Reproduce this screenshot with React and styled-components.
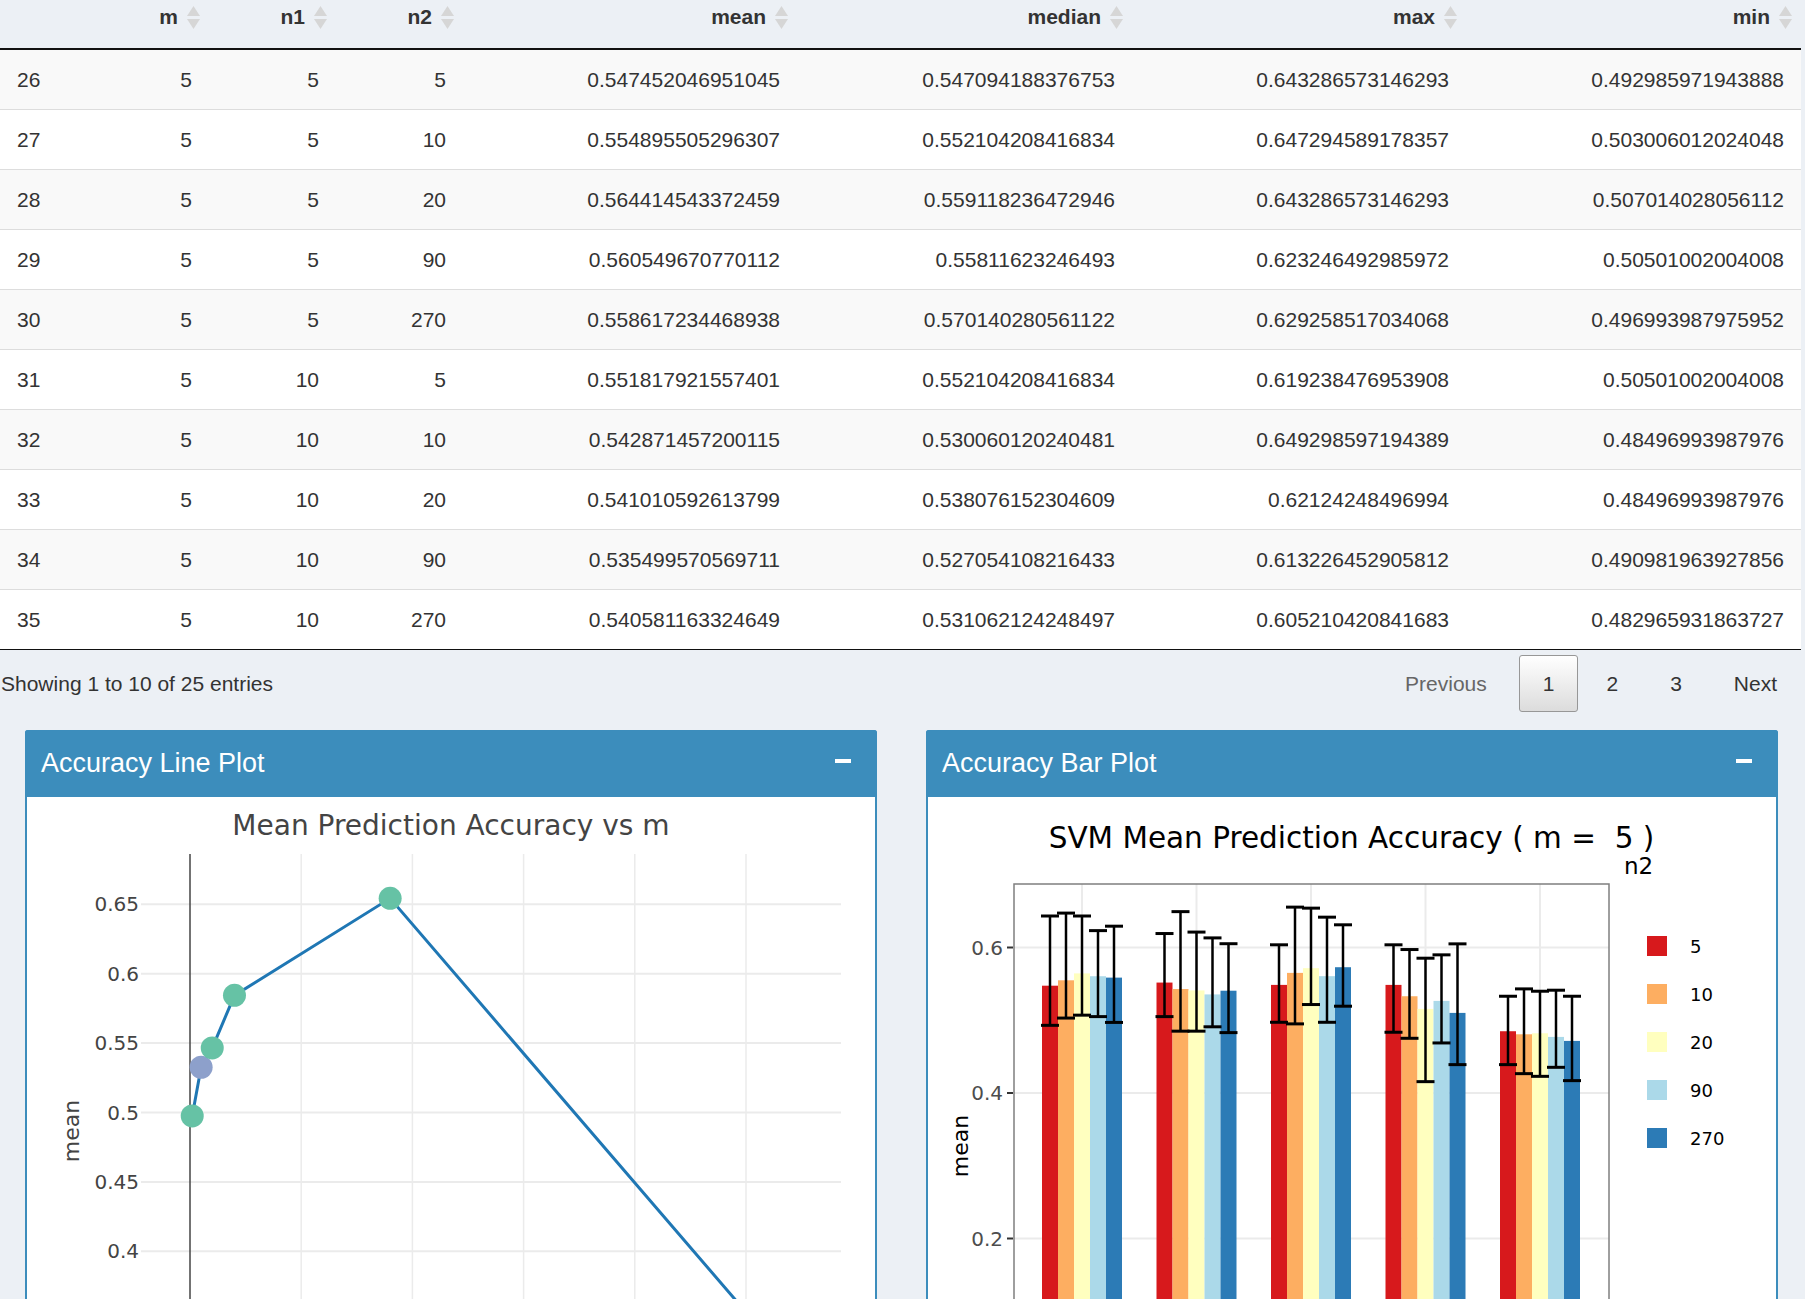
import React from 'react';
import styled, { createGlobalStyle } from 'styled-components';

const UI_FONT = '"Liberation Sans", Arial, sans-serif';
const PLOT_FONT = '"DejaVu Sans", Verdana, sans-serif';
const COLS = '75px 127px 127px 127px 334px 335px 334px 342px';

const GlobalStyle = createGlobalStyle`
  html, body {
    margin: 0;
    padding: 0;
    background: #ecf0f5;
    overflow: hidden;
  }
`;

const Page = styled.div`
  height: 1299px;
  overflow: hidden;
  font-family: ${UI_FONT};
  font-size: 21px;
  color: #333;
`;

const Table = styled.div`
  width: 1801px;
`;

const HeaderRow = styled.div`
  display: grid;
  grid-template-columns: ${COLS};
  height: 50px;
  box-sizing: border-box;
  border-bottom: 2px solid #111;
`;

const HeadCell = styled.div`
  display: flex;
  align-items: center;
  justify-content: flex-end;
  gap: 9px;
  padding: 0 ${({ $last }) => ($last ? 9 : 2)}px 14px 0;
  font-weight: 700;
`;

const Row = styled.div`
  display: grid;
  grid-template-columns: ${COLS};
  align-items: center;
  height: 60px;
  box-sizing: border-box;
  background: ${({ $odd }) => ($odd ? '#f9f9f9' : '#fff')};
  border-bottom: 1px solid ${({ $end }) => ($end ? '#111' : '#ddd')};
`;

const Cell = styled.div`
  text-align: ${({ $left }) => ($left ? 'left' : 'right')};
  padding: 0 ${({ $last }) => ($last ? 17 : 10)}px 0 ${({ $left }) => ($left ? 17 : 10)}px;
  white-space: nowrap;
`;

const Footer = styled.div`
  display: flex;
  justify-content: space-between;
  align-items: center;
  height: 80px;
  box-sizing: border-box;
  padding: 5px 4px 18px 1px;
`;

const Info = styled.div`
  color: #333;
`;

const Pager = styled.div`
  display: flex;
  align-items: center;
`;

const PageButton = styled.span`
  display: flex;
  align-items: center;
  height: 57px;
  box-sizing: border-box;
  padding: 0 ${({ $muted }) => ($muted ? 27 : 23)}px 0 23px;
  margin-left: 4px;
  border: 1px solid ${({ $current }) => ($current ? '#979797' : 'transparent')};
  border-radius: 3px;
  color: ${({ $muted }) => ($muted ? '#666' : '#333')};
  background: ${({ $current }) =>
    $current ? 'linear-gradient(to bottom, #fff 0%, #dcdcdc 100%)' : 'transparent'};
`;

const BoxRow = styled.div`
  display: grid;
  grid-template-columns: 1fr 1fr;
  gap: 49px;
  padding: 0 27px 0 25px;
`;

const Box = styled.div`
  background: #fff;
  border: 2px solid #3c8dbc;
  border-radius: 3px;
`;

const BoxHeader = styled.div`
  display: flex;
  justify-content: space-between;
  align-items: center;
  height: 67px;
  padding: 0 24px 0 16px;
  margin: -2px -2px 0;
  border-radius: 3px 3px 0 0;
  background: #3c8dbc;
  color: #fff;
`;

const BoxTitle = styled.h3`
  margin: 0;
  font-family: ${UI_FONT};
  font-size: 27px;
  font-weight: 400;
`;

const Minus = styled.span`
  width: 16px;
  height: 4px;
  margin-top: -5px;
  margin-right: 2px;
  background: #fff;
`;

const BoxBody = styled.div`
  height: 560px;
  overflow: hidden;
`;

const Chart = styled.svg`
  display: block;
  font-family: ${PLOT_FONT};
`;

const PreText = styled.text`
  white-space: pre;
`;

const rows = [
  ['26', '5', '5', '5', '0.547452046951045', '0.547094188376753', '0.643286573146293', '0.492985971943888'],
  ['27', '5', '5', '10', '0.554895505296307', '0.552104208416834', '0.647294589178357', '0.503006012024048'],
  ['28', '5', '5', '20', '0.564414543372459', '0.559118236472946', '0.643286573146293', '0.507014028056112'],
  ['29', '5', '5', '90', '0.560549670770112', '0.55811623246493', '0.623246492985972', '0.50501002004008'],
  ['30', '5', '5', '270', '0.558617234468938', '0.570140280561122', '0.629258517034068', '0.496993987975952'],
  ['31', '5', '10', '5', '0.551817921557401', '0.552104208416834', '0.619238476953908', '0.50501002004008'],
  ['32', '5', '10', '10', '0.542871457200115', '0.530060120240481', '0.649298597194389', '0.48496993987976'],
  ['33', '5', '10', '20', '0.541010592613799', '0.538076152304609', '0.62124248496994', '0.48496993987976'],
  ['34', '5', '10', '90', '0.535499570569711', '0.527054108216433', '0.613226452905812', '0.490981963927856'],
  ['35', '5', '10', '270', '0.540581163324649', '0.531062124248497', '0.605210420841683', '0.482965931863727'],
];

const headers = ['', 'm', 'n1', 'n2', 'mean', 'median', 'max', 'min'];

const SortIcon = () => (
  <svg width="13" height="23" viewBox="0 0 13 23">
    <path d="M6.5 0 L13 10 L0 10 Z" fill="#d6d6d6" />
    <path d="M0 13 L13 13 L6.5 23 Z" fill="#d6d6d6" />
  </svg>
);

// line plot: mean vs m
const linePoints = [
  { m: 1, v: 0.4975, c: '#66c2a5' },
  { m: 5, v: 0.5326, c: '#8da0cb' },
  { m: 10, v: 0.5465, c: '#66c2a5' },
  { m: 20, v: 0.5844, c: '#66c2a5' },
  { m: 90, v: 0.6543, c: '#66c2a5' },
  { m: 270, v: 0.3189, c: '#66c2a5' },
];
const lx = (m) => 163 + m * 2.224;
const ly = (v) => 107.3 + (0.65 - v) * 1388;

const LinePlot = () => (
  <Chart width="848" height="560">
    <text x="424" y="28" fontSize="28" fill="#444" textAnchor="middle" dominantBaseline="central">
      Mean Prediction Accuracy vs m
    </text>
    {[1, 2, 3, 4, 5].map((k) => (
      <line key={k} x1={163 + 111.2 * k} x2={163 + 111.2 * k} y1="57" y2="560" stroke="#ebebeb" strokeWidth="1.5" />
    ))}
    {[0.65, 0.6, 0.55, 0.5, 0.45, 0.4, 0.35].map((v) => (
      <line key={v} x1="114" x2="814" y1={ly(v)} y2={ly(v)} stroke="#ebebeb" strokeWidth="2" />
    ))}
    {['0.65', '0.6', '0.55', '0.5', '0.45', '0.4'].map((t) => (
      <text key={t} x="112" y={ly(Number(t))} fontSize="20" fill="#444" textAnchor="end" dominantBaseline="central">
        {t}
      </text>
    ))}
    <line x1="163" x2="163" y1="57" y2="560" stroke="#444" strokeWidth="1.5" />
    <text
      x="44.5"
      y="334"
      fontSize="22"
      fill="#444"
      textAnchor="middle"
      dominantBaseline="central"
      transform="rotate(-90 44.5 334)"
    >
      mean
    </text>
    <polyline
      points={linePoints.map((p) => `${lx(p.m)},${ly(p.v)}`).join(' ')}
      fill="none"
      stroke="#1f77b4"
      strokeWidth="3"
    />
    {linePoints.slice(0, 5).map((p) => (
      <circle key={p.m} cx={lx(p.m)} cy={ly(p.v)} r="11.5" fill={p.c} />
    ))}
  </Chart>
);

// bar plot: mean with min/max error bars, grouped by n1, filled by n2
const fills = ['#d7191c', '#fdae61', '#ffffbf', '#abd9e9', '#2c7bb6'];
const legend = ['5', '10', '20', '90', '270'];
const groups = [
  { mean: [0.5475, 0.5549, 0.5644, 0.5605, 0.5586], max: [0.6433, 0.6473, 0.6433, 0.6232, 0.6293], min: [0.493, 0.503, 0.507, 0.505, 0.497] },
  { mean: [0.5518, 0.5429, 0.541, 0.5355, 0.5406], max: [0.6192, 0.6493, 0.6212, 0.6132, 0.6052], min: [0.505, 0.485, 0.485, 0.491, 0.483] },
  { mean: [0.5486, 0.5651, 0.5716, 0.5606, 0.5729], max: [0.6037, 0.6555, 0.6541, 0.6417, 0.6312], min: [0.4972, 0.495, 0.5216, 0.4972, 0.5193] },
  { mean: [0.5486, 0.533, 0.5156, 0.5266, 0.5101], max: [0.6037, 0.5972, 0.5853, 0.5899, 0.605], min: [0.4835, 0.4752, 0.4156, 0.4688, 0.439] },
  { mean: [0.4849, 0.4807, 0.4821, 0.4771, 0.4716], max: [0.533, 0.5431, 0.5399, 0.5413, 0.533], min: [0.439, 0.4266, 0.4229, 0.4353, 0.417] },
];
const by = (v) => 587 - v * 727.5;
const gx = (i) => 154 + 114.5 * i;

const BarPlot = () => (
  <Chart width="848" height="560">
    <PreText x="423.5" y="41" fontSize="29.5" fill="#000" textAnchor="middle" dominantBaseline="central">
      {'SVM Mean Prediction Accuracy ( m =  5 )'}
    </PreText>
    <text x="696" y="69" fontSize="23" fill="#000" dominantBaseline="central">
      n2
    </text>
    {[0.2, 0.4, 0.6].map((v) => (
      <line key={v} x1="86" x2="681" y1={by(v)} y2={by(v)} stroke="#ebebeb" strokeWidth="2" />
    ))}
    {groups.map((g, i) => (
      <line key={i} x1={gx(i)} x2={gx(i)} y1="87" y2="560" stroke="#ebebeb" strokeWidth="2" />
    ))}
    {groups.map((g, i) =>
      g.mean.map((v, j) => (
        <rect key={`${i}-${j}`} x={gx(i) - 40 + 16 * j} y={by(v)} width="16" height={600 - by(v)} fill={fills[j]} />
      ))
    )}
    {groups.map((g, i) =>
      g.mean.map((v, j) => {
        const cx = gx(i) - 32 + 16 * j;
        return (
          <g key={`e${i}-${j}`} stroke="#000">
            <line x1={cx} x2={cx} y1={by(g.max[j])} y2={by(g.min[j])} strokeWidth="2.5" />
            <line x1={cx - 9} x2={cx + 9} y1={by(g.max[j])} y2={by(g.max[j])} strokeWidth="3" />
            <line x1={cx - 9} x2={cx + 9} y1={by(g.min[j])} y2={by(g.min[j])} strokeWidth="3" />
          </g>
        );
      })
    )}
    <rect x="86" y="87" width="595" height="600" fill="none" stroke="#7f7f7f" strokeWidth="1.5" />
    {['0.2', '0.4', '0.6'].map((t) => (
      <g key={t}>
        <line x1="79" x2="85" y1={by(Number(t))} y2={by(Number(t))} stroke="#333" strokeWidth="2" />
        <text x="75" y={by(Number(t))} fontSize="20" fill="#4d4d4d" textAnchor="end" dominantBaseline="central">
          {t}
        </text>
      </g>
    ))}
    <text
      x="32"
      y="349"
      fontSize="22"
      fill="#000"
      textAnchor="middle"
      dominantBaseline="central"
      transform="rotate(-90 32 349)"
    >
      mean
    </text>
    {legend.map((l, k) => (
      <g key={l}>
        <rect x="719" y={139 + 48 * k} width="20" height="20" fill={fills[k]} />
        <text x="762" y={149 + 48 * k} fontSize="18" fill="#000" dominantBaseline="central">
          {l}
        </text>
      </g>
    ))}
  </Chart>
);

const App = () => (
  <Page>
    <GlobalStyle />
    <Table>
      <HeaderRow>
        {headers.map((h, i) => (
          <HeadCell key={i} $last={i === headers.length - 1}>
            {h && <span>{h}</span>}
            {h && <SortIcon />}
          </HeadCell>
        ))}
      </HeaderRow>
      {rows.map((r, i) => (
        <Row key={r[0]} $odd={i % 2 === 0} $end={i === rows.length - 1}>
          {r.map((c, j) => (
            <Cell key={j} $left={j === 0} $last={j === r.length - 1}>
              {c}
            </Cell>
          ))}
        </Row>
      ))}
    </Table>
    <Footer>
      <Info>Showing 1 to 10 of 25 entries</Info>
      <Pager>
        <PageButton $muted>Previous</PageButton>
        <PageButton $current>1</PageButton>
        <PageButton>2</PageButton>
        <PageButton>3</PageButton>
        <PageButton>Next</PageButton>
      </Pager>
    </Footer>
    <BoxRow>
      <Box>
        <BoxHeader>
          <BoxTitle>Accuracy Line Plot</BoxTitle>
          <Minus />
        </BoxHeader>
        <BoxBody>
          <LinePlot />
        </BoxBody>
      </Box>
      <Box>
        <BoxHeader>
          <BoxTitle>Accuracy Bar Plot</BoxTitle>
          <Minus />
        </BoxHeader>
        <BoxBody>
          <BarPlot />
        </BoxBody>
      </Box>
    </BoxRow>
  </Page>
);

export default App;
